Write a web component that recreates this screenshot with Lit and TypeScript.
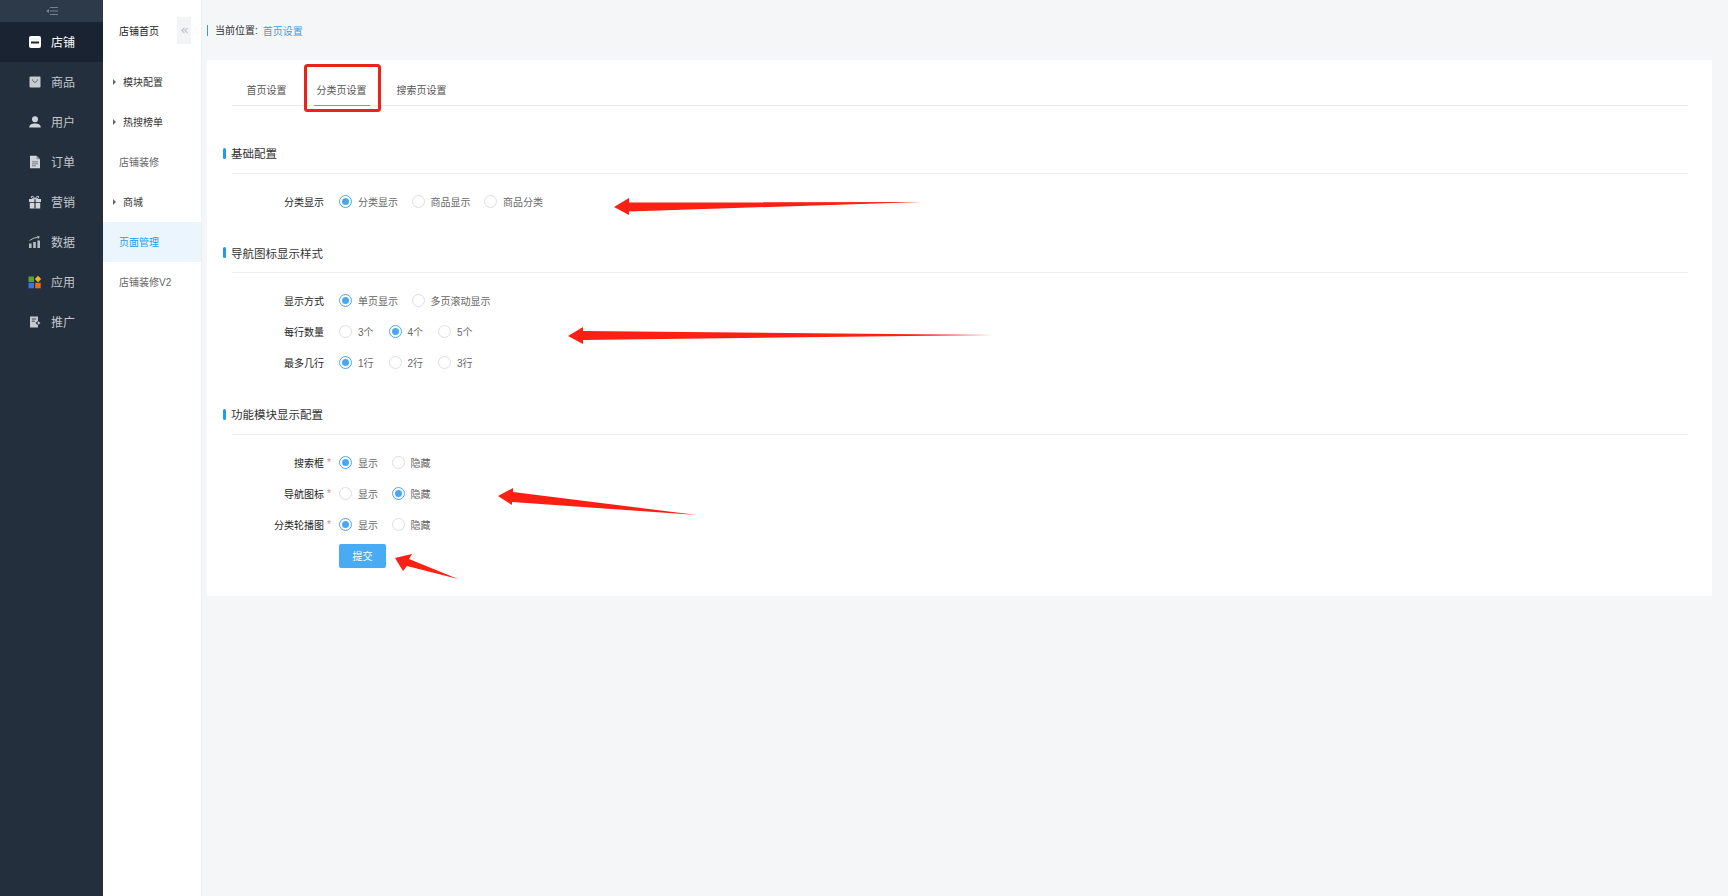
import {LitElement, html, css} from 'lit';
import {customElement} from 'lit/decorators.js';
import {classMap} from 'lit/directives/class-map.js';

const icons: Record<string, unknown> = {
    shop: html`<svg viewBox="0 0 14 14" width="14" height="14"><rect x="1" y="1" width="12" height="12" rx="2" fill="#fff"/><path d="M3 6.500h8v2H3z" fill="#1a2433"/><path d="M1 4h12" stroke="#e6e8ea" stroke-width="1"/></svg>`,
    goods: html`<svg viewBox="0 0 14 14" width="14" height="14"><rect x="1.500" y="1.500" width="11" height="11" rx="1" fill="#c9cccf"/><path d="M4.500 4.500c.3 3.600 4.700 3.600 5 0" fill="none" stroke="#5b636c" stroke-width="1"/></svg>`,
    user: html`<svg viewBox="0 0 14 14" width="14" height="14"><circle cx="7" cy="4.200" r="3" fill="#d2d5d8"/><path d="M1.200 12.600c0-3 2.400-4.200 5.800-4.200s5.800 1.200 5.800 4.200z" fill="#d2d5d8"/></svg>`,
    order: html`<svg viewBox="0 0 14 14" width="14" height="14"><path d="M2 .8h6.500l3.500 3.500v9H2z" fill="#d2d5d8"/><path d="M8.500.8v3.500H12z" fill="#8f959b"/><path d="M4 6.800h6M4 8.800h6M4 10.800h4" stroke="#6a727a" stroke-width=".9"/></svg>`,
    gift: html`<svg viewBox="0 0 14 14" width="14" height="14"><rect x="1" y="4" width="12" height="3" fill="#d2d5d8"/><rect x="1.800" y="7.800" width="10.400" height="5.700" fill="#d2d5d8"/><path d="M7 4v9.500" stroke="#232f3d" stroke-width="1.200"/><path d="M7 3.800C5 .2 2.500 1 3.500 2.800c.4.700 2 1 3.500 1zm0 0c2-3.600 4.500-2.800 3.500-1-.4.700-2 1-3.500 1z" fill="none" stroke="#d2d5d8" stroke-width="1"/></svg>`,
    chart: html`<svg viewBox="0 0 14 14" width="14" height="14"><path d="M1 8.500h2.600v4.500H1zM5.200 7h2.600v6H5.200zM9.400 5.500H12V13H9.400z" fill="#b9bdc1"/><path d="M1.500 5.500 6 3l3.500-.5" fill="none" stroke="#b9bdc1" stroke-width="1"/><path d="M9 .8l3 1-2 2.200z" fill="#b9bdc1"/></svg>`,
    apps: html`<svg viewBox="0 0 14 14" width="14" height="14"><rect x=".5" y="1.500" width="5.500" height="5.500" fill="#54a33b"/><path d="M10 .8l3.200 3.200-3.200 3.200L6.800 4z" fill="#f0b429"/><rect x=".5" y="7.800" width="5.500" height="5.500" fill="#3d74e0"/><rect x="7.200" y="7.800" width="5.500" height="5.500" fill="#e56f1f"/></svg>`,
    promo: html`<svg viewBox="0 0 14 14" width="14" height="14"><path d="M2 1.500h8v4.200L7.500 8l2.500 2.200v2.300H2z" fill="#c9cccf"/><path d="M3.800 4h4.400M3.800 6.200h3" stroke="#38434f" stroke-width="1"/><path d="M12.500 8l-2.800-2v4z" fill="#c9cccf"/></svg>`,
};

const mainMenu = [
    {icon: 'shop', label: '店铺', active: true},
    {icon: 'goods', label: '商品'},
    {icon: 'user', label: '用户'},
    {icon: 'order', label: '订单'},
    {icon: 'gift', label: '营销'},
    {icon: 'chart', label: '数据'},
    {icon: 'apps', label: '应用'},
    {icon: 'promo', label: '推广'},
];

const subMenu = [
    {label: '模块配置', caret: true},
    {label: '热搜榜单', caret: true},
    {label: '店铺装修'},
    {label: '商城', caret: true},
    {label: '页面管理', active: true},
    {label: '店铺装修V2'},
];

const sections = [
    {
        title: '基础配置',
        rows: [{label: '分类显示', options: ['分类显示', '商品显示', '商品分类'], checked: 0}],
    },
    {
        title: '导航图标显示样式',
        rows: [
            {label: '显示方式', options: ['单页显示', '多页滚动显示'], checked: 0},
            {label: '每行数量', options: ['3个', '4个', '5个'], checked: 1},
            {label: '最多几行', options: ['1行', '2行', '3行'], checked: 0},
        ],
    },
    {
        title: '功能模块显示配置',
        rows: [
            {label: '搜索框', options: ['显示', '隐藏'], checked: 0, required: true},
            {label: '导航图标', options: ['显示', '隐藏'], checked: 1, required: true},
            {label: '分类轮播图', options: ['显示', '隐藏'], checked: 0, required: true},
        ],
    },
];

@customElement('app-root')
export class AppRoot extends LitElement {
    renderRow(row: any) {
        return html`
            <div class="row">
                <div class="row-label">${row.label}</div>
                <div class="mark">${row.required ? '*' : ''}</div>
                <div class="options">
                    ${row.options.map((o: string, i: number) => html`
                        <div class="option">
                            <span class=${classMap({radio: true, checked: i === row.checked})}></span>
                            <span class="option-text">${o}</span>
                        </div>
                    `)}
                </div>
            </div>
        `;
    }

    render() {
        return html`
            <aside class="sidebar">
                <div class="toggle">
                    <svg viewBox="0 0 12 8" width="12" height="8"><path d="M4 .5h8M4 4h8M4 7.500h8" stroke="#77838f" stroke-width="1"/><path d="M0 4l3-2v4z" fill="#77838f"/></svg>
                </div>
                ${mainMenu.map(m => html`
                    <div class=${classMap({'main-item': true, active: !!m.active})}>
                        ${icons[m.icon]}<span class="main-text">${m.label}</span>
                    </div>
                `)}
            </aside>

            <nav class="submenu">
                <div class="sub-head">
                    <span class="sub-text">店铺首页</span>
                    <div class="collapse">
                        <svg viewBox="0 0 8 8" width="7" height="7"><path d="M4 1 1 4l3 3M7.500 1l-3 3 3 3" fill="none" stroke="#c2c6cb" stroke-width="1.500"/></svg>
                    </div>
                </div>
                ${subMenu.map(s => html`
                    <div class=${classMap({'sub-item': true, active: !!s.active, parent: !!s.caret})}>
                        ${s.caret ? html`<i class="caret"></i>` : ''}<span class="sub-text">${s.label}</span>
                    </div>
                `)}
            </nav>

            <main class="content">
                <div class="crumb">
                    <span class="crumb-text">当前位置:</span><span class="crumb-link">首页设置</span>
                </div>
                <section class="card">
                    <div class="tabs">
                        <div class="tab">首页设置</div>
                        <div class="tab active">分类页设置</div>
                        <div class="tab">搜索页设置</div>
                    </div>
                    ${sections.map(s => html`
                        <div class="section">
                            <div class="section-head"><i class="bar"></i><span>${s.title}</span></div>
                            <div class="rows">${s.rows.map(r => this.renderRow(r))}</div>
                        </div>
                    `)}
                    <button class="submit">提交</button>
                </section>
            </main>

            <svg class="notes" viewBox="0 0 1728 896" width="1728" height="896">
                <rect x="305.500" y="65.500" width="74" height="45" rx="2" fill="none" stroke="#e8241c" stroke-width="3"/>
                <polygon fill="#fb2014" points="922,202 629,202.500 629,198 614,207 629,215 629,211.500"/>
                <polygon fill="#fb2014" points="993,335 583,331 583,327 568,336 583,344 583,340"/>
                <polygon fill="#fb2014" points="697,515 513,492 513,488 498,496 512,505 512,502"/>
                <polygon fill="#fb2014" points="458,579 409,559 412,554 395,558 403,571 407,566"/>
            </svg>
        `;
    }

    static styles = css`
        :host {
            display: flex;
            position: relative;
            height: 896px;
            overflow: hidden;
            background: #f5f6f8;
            font-family: "Liberation Sans", "Noto Sans CJK SC", sans-serif;
            font-size: 10px;
            color: #333;
        }

        .sidebar {
            width: 103px;
            flex: none;
            background: #232f3d;
        }

        .toggle {
            height: 22px;
            background: #2c3a49;
            display: flex;
            align-items: center;
            justify-content: center;
        }

        .main-item {
            height: 40px;
            display: flex;
            align-items: center;
            gap: 9px;
            padding-left: 28px;
            font-size: 12px;
            color: #c4c8cc;
        }

        .main-text {
            margin-top: -2px;
        }

        .main-item.active {
            background: #1a2331;
            color: #fff;
        }

        .submenu {
            width: 99px;
            flex: none;
            background: #fff;
            border-right: 1px solid #eef0f2;
            box-sizing: border-box;
        }

        .sub-head {
            height: 62px;
            display: flex;
            align-items: center;
            justify-content: space-between;
            padding: 0 10px 0 16px;
            color: #222;
        }

        .sub-text {
            margin-top: -2px;
        }

        .collapse {
            width: 14px;
            height: 27px;
            margin-top: -2px;
            background: #f3f4f6;
            display: flex;
            align-items: center;
            justify-content: center;
        }

        .sub-item {
            height: 40px;
            display: flex;
            align-items: center;
            padding-left: 16px;
            color: #666;
        }

        .sub-item.parent {
            padding-left: 10px;
            color: #333;
        }

        .sub-item.active {
            background: #ebf5fe;
            color: #1a9cf0;
        }

        .caret {
            width: 0;
            height: 0;
            margin-right: 7px;
            border-left: 3px solid #666;
            border-top: 3px solid transparent;
            border-bottom: 3px solid transparent;
        }

        .content {
            flex: 1;
            min-width: 0;
            padding: 0 16px 0 5px;
        }

        .crumb {
            height: 60px;
            display: flex;
            align-items: center;
        }

        .crumb-text {
            border-left: 1px solid #3a9ad9;
            padding-left: 7px;
            line-height: 11px;
        }

        .crumb-link {
            margin-left: 5px;
            color: #3b9fe6;
        }

        .card {
            background: #fff;
            padding: 15px 24px 28px 25px;
        }

        .tabs {
            display: flex;
            gap: 24px;
            padding-left: 11.5px;
            margin-bottom: 27.5px;
            border-bottom: 1px solid #e8eaec;
        }

        .tab {
            height: 30px;
            line-height: 32px;
            padding: 0 3px;
            margin-bottom: -1px;
            color: #555;
        }

        .tab.active {
            height: 31px;
            box-sizing: border-box;
            border-bottom: 1px solid #4fa6e8;
        }

        .section {
            margin-top: 16.5px;
        }

        .section-head {
            height: 40px;
            box-sizing: border-box;
            border-bottom: 1px solid #eceef0;
            display: flex;
            align-items: center;
            font-size: 11.5px;
            color: #333;
        }

        .bar {
            width: 3px;
            height: 11px;
            margin: 0 5px 0 -9px;
            border-radius: 2px;
            background: #1a9cf0;
        }

        .rows {
            padding-top: 12px;
        }

        .row {
            height: 31px;
            display: flex;
            align-items: center;
        }

        .row-label {
            width: 92px;
            text-align: right;
            color: #222;
        }

        .mark {
            width: 12px;
            padding-left: 3px;
            color: #d98a8a;
        }

        .options {
            display: flex;
            gap: 13.5px;
            color: #666;
        }

        .option {
            display: flex;
            align-items: center;
            gap: 6px;
        }

        .option-text {
            min-width: 17px;
        }

        .radio {
            width: 13px;
            height: 13px;
            box-sizing: border-box;
            border: 1px solid #dcdee2;
            border-radius: 50%;
            background: #fff;
            display: flex;
            align-items: center;
            justify-content: center;
        }

        .radio.checked {
            border-color: #4aa8f0;
        }

        .radio.checked::after {
            content: '';
            width: 7px;
            height: 7px;
            border-radius: 50%;
            background: #4aa8f0;
        }

        .submit {
            display: block;
            width: 47px;
            height: 24px;
            margin: 4px 0 0 107px;
            padding: 0;
            border: 0;
            border-radius: 2px;
            background: #48abf3;
            color: #fff;
            font: inherit;
        }

        .notes {
            position: absolute;
            left: 0;
            top: 0;
            pointer-events: none;
        }
    `;
}
